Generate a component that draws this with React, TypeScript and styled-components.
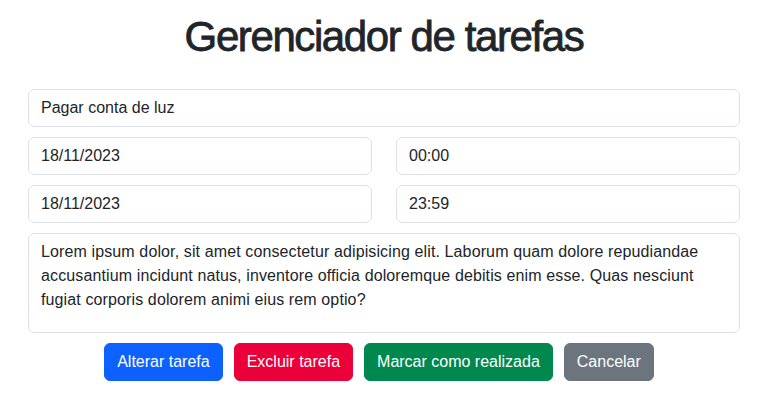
import React from "react";
import styled, { createGlobalStyle } from "styled-components";

const GlobalStyle = createGlobalStyle`
  *, *::before, *::after { box-sizing: border-box; }
  body {
    margin: 0;
    background: #ffffff;
    color: #212529;
    font-family: "Liberation Sans", Arial, sans-serif;
    font-size: 16px;
    line-height: 1.5;
  }
`;

const Page = styled.main`
  padding: 12px 32px 0 28px;
`;

const Title = styled.h1`
  margin: 0 0 27px;
  text-align: center;
  font-size: 42px;
  line-height: 1.2;
  font-weight: 400;
  letter-spacing: -1.4px;
  -webkit-text-stroke: 0.8px #212529;
  color: #212529;
`;

const Form = styled.form`
  display: flex;
  flex-direction: column;
  gap: 10px;
`;

const Row = styled.div`
  display: grid;
  grid-template-columns: 1fr 1fr;
  column-gap: 24px;
`;

const Field = styled.input`
  display: block;
  width: 100%;
  height: 38px;
  padding: 6px 12px;
  font-family: inherit;
  font-size: 16px;
  line-height: 24px;
  color: #212529;
  background: #fff;
  border: 1px solid #dee2e6;
  border-radius: 6px;
  outline: none;
`;

const Area = styled.textarea`
  display: block;
  width: 100%;
  height: 100px;
  padding: 6px 8px 6px 12px;
  font-family: inherit;
  font-size: 16px;
  line-height: 24px;
  letter-spacing: 0.12px;
  color: #212529;
  background: #fff;
  border: 1px solid #dee2e6;
  border-radius: 6px;
  resize: none;
  outline: none;
`;

const Actions = styled.div`
  display: flex;
  justify-content: center;
  gap: 11px;
  padding-right: 10px;
`;

const palette = {
  primary: "#0d62fe",
  danger: "#ec0039",
  success: "#00884f",
  secondary: "#6c757d",
} as const;

const Button = styled.button<{ $variant: keyof typeof palette }>`
  height: 38px;
  padding: 6px 12px;
  font-family: inherit;
  font-size: 16px;
  line-height: 24px;
  color: #fff;
  background: ${(p) => palette[p.$variant]};
  border: 1px solid ${(p) => palette[p.$variant]};
  border-radius: 6px;
  cursor: pointer;
`;

export default function App() {
  return (
    <>
      <GlobalStyle />
      <Page>
        <Title>Gerenciador de tarefas</Title>
        <Form onSubmit={(e) => e.preventDefault()}>
          <Field type="text" defaultValue="Pagar conta de luz" />
          <Row>
            <Field type="text" defaultValue="18/11/2023" />
            <Field type="text" defaultValue="00:00" />
          </Row>
          <Row>
            <Field type="text" defaultValue="18/11/2023" />
            <Field type="text" defaultValue="23:59" />
          </Row>
          <Area defaultValue="Lorem ipsum dolor, sit amet consectetur adipisicing elit. Laborum quam dolore repudiandae accusantium incidunt natus, inventore officia doloremque debitis enim esse. Quas nesciunt fugiat corporis dolorem animi eius rem optio?" />
          <Actions>
            <Button type="button" $variant="primary">Alterar tarefa</Button>
            <Button type="button" $variant="danger">Excluir tarefa</Button>
            <Button type="button" $variant="success">Marcar como realizada</Button>
            <Button type="button" $variant="secondary">Cancelar</Button>
          </Actions>
        </Form>
      </Page>
    </>
  );
}
